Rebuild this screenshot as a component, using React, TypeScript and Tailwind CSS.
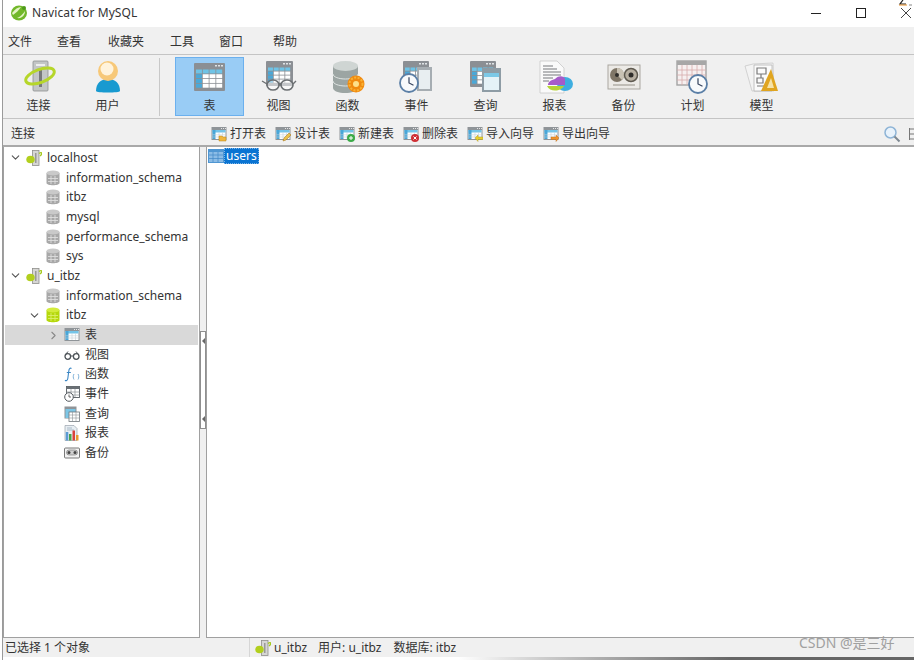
import { ReactNode } from "react";
import { ChevronDown, ChevronRight } from "lucide-react";

// big toolbar icons, all 36x36
const TableBase = ({ x = 0, y = 0, w = 31, h = 28 }: { x?: number; y?: number; w?: number; h?: number }) => {
  const cols = [0, 1, 2, 3];
  const rows = [0, 1, 2, 3];
  const cw = (w - 4) / 4;
  const ch = (h - 9) / 4;
  return (
    <g>
      <rect x={x} y={y} width={w} height={h} rx="1" fill="#8b8f94" />
      <rect x={x + w - 10} y={y + 2} width="2" height="1.5" fill="#dfe3e6" />
      <rect x={x + w - 7} y={y + 2} width="2" height="1.5" fill="#dfe3e6" />
      <rect x={x + w - 4} y={y + 2} width="2" height="1.5" fill="#dfe3e6" />
      {rows.map((r) =>
        cols.map((c) => (
          <rect
            key={`${r}-${c}`}
            x={x + 2 + c * cw}
            y={y + 6.5 + r * ch}
            width={cw - 0.8}
            height={ch - 0.8}
            fill={r === 0 ? "#6fc3e6" : c === 0 ? "#4aa8d8" : "#ffffff"}
          />
        )),
      )}
    </g>
  );
};

const Clock = ({ cx, cy, r }: { cx: number; cy: number; r: number }) => (
  <g>
    <circle cx={cx} cy={cy} r={r} fill="#f8fafc" stroke="#5b7fa6" strokeWidth="1.8" />
    <path d={`M${cx} ${cy - r * 0.65}V${cy}L${cx + r * 0.5} ${cy + r * 0.25}`} stroke="#33415c" strokeWidth="1.2" fill="none" />
  </g>
);

const ConnectBig = () => (
  <svg width="36" height="36" viewBox="0 0 36 36">
    <rect x="12" y="1" width="15" height="30" rx="1" fill="#c3c6c6" stroke="#8d9090" strokeWidth="0.8" />
    <rect x="15" y="4" width="9" height="2" fill="#eeeeee" />
    <rect x="18" y="9" width="3" height="18" fill="#77797a" />
    <ellipse cx="19" cy="16" rx="15" ry="6.500" transform="rotate(-20 19 16)" fill="none" stroke="#b6d62a" strokeWidth="3" />
  </svg>
);

const UserBig = () => (
  <svg width="36" height="36" viewBox="0 0 36 36">
    <path d="M6 31c0-8 5-12 12-12s12 4 12 12c0 2-24 2-24 0z" fill="#189ad0" />
    <circle cx="18" cy="11" r="10" fill="#f7c878" />
    <circle cx="17" cy="9" r="6.500" fill="#fff3dc" />
  </svg>
);

const TableBig = () => (
  <svg width="36" height="36" viewBox="0 0 36 36">
    <TableBase x={2} y={3} w={31} h={28} />
  </svg>
);

const ViewBig = () => (
  <svg width="36" height="36" viewBox="0 0 36 36">
    <TableBase x={5} y={1} w={27} h={25} />
    <g fill="#ffffff" fillOpacity="0.5" stroke="#6b6f72" strokeWidth="1.6">
      <ellipse cx="12" cy="25" rx="6" ry="5" />
      <ellipse cx="26" cy="25" rx="6" ry="5" />
    </g>
    <path d="M18 24h2M6 24l-5-3M32 24l3-3" stroke="#6b6f72" strokeWidth="1.4" />
  </svg>
);

const FuncBig = () => (
  <svg width="36" height="36" viewBox="0 0 36 36">
    <path d="M3 6v22c0 3 6 5 12 5s13-2 13-5V6z" fill="#9ca5a3" />
    <ellipse cx="15.500" cy="6" rx="12.500" ry="5" fill="#cfd5d3" />
    <path d="M3 14c0 3 6 5 12.500 5S28 17 28 14M3 21c0 3 6 5 12.500 5S28 24 28 21" stroke="#dfe4e2" strokeWidth="1" fill="none" />
    <circle cx="26" cy="24" r="8.500" fill="#f08a10" />
    <circle cx="26" cy="24" r="6.500" fill="none" stroke="#f9b233" strokeWidth="2" strokeDasharray="2 1.500" />
    <circle cx="26" cy="24" r="3" fill="#fde08a" />
  </svg>
);

const EventBig = () => (
  <svg width="36" height="36" viewBox="0 0 36 36">
    <TableBase x={4} y={1} w={26} h={25} />
    <rect x="18" y="7" width="15" height="24" fill="#a6adb2" />
    <rect x="20" y="10" width="11" height="19" fill="#e8eef1" />
    <Clock cx={10} cy={23} r={9} />
  </svg>
);

const QueryBig = () => (
  <svg width="36" height="36" viewBox="0 0 36 36">
    <TableBase x={2} y={1} w={26} h={26} />
    <rect x="14" y="8" width="19" height="24" fill="#8e9ca5" />
    <rect x="16" y="13" width="15" height="17" fill="#e5f2f7" />
    <rect x="16" y="13" width="15" height="4" fill="#7cc8e6" />
  </svg>
);

const ReportBig = () => (
  <svg width="36" height="36" viewBox="0 0 36 36">
    <path d="M3 1h17l7 7v25H3z" fill="#fafafa" stroke="#c8c8c8" strokeWidth="0.8" />
    <path d="M6 6h10M6 9h14M6 12h18M6 15h18M6 18h10M6 21h6" stroke="#77797c" strokeWidth="1" />
    <ellipse cx="28" cy="24" rx="8" ry="7" fill="#3eaee0" />
    <path d="M18 19c4-4 9-3 10 0v6H11c0-3 3-5 7-6z" fill="#a65bc9" />
    <path d="M10 26h17c-2 5-14 7-17 0z" fill="#b5d335" />
  </svg>
);

const BackupBig = () => (
  <svg width="36" height="36" viewBox="0 0 36 36">
    <rect x="2" y="5" width="32" height="24" fill="#eceae6" stroke="#a9a69f" strokeWidth="1" />
    <circle cx="11" cy="15" r="7" fill="#7f7667" />
    <path d="M11 8a7 7 0 0 1 5 12l-5-5z" fill="#c9c2b4" />
    <circle cx="11" cy="15" r="2" fill="#2f2d2a" />
    <circle cx="25" cy="15" r="6.500" fill="#b8b0a2" stroke="#5f5a50" strokeWidth="1.500" />
    <circle cx="25" cy="15" r="2.500" fill="#2f2d2a" />
    <path d="M7 25h22" stroke="#c0bdb6" strokeWidth="2" />
  </svg>
);

const ScheduleBig = () => (
  <svg width="36" height="36" viewBox="0 0 36 36">
    <rect x="2" y="1" width="29" height="24" fill="#f6f0f0" stroke="#a3a3a3" strokeWidth="1.4" />
    <rect x="2" y="1" width="29" height="4" fill="#a7a7a7" />
    <path d="M7 5v20M12 5v20M17 5v20M22 5v20M27 5v20M2 10h29M2 15h29M2 20h29" stroke="#d7abab" strokeWidth="0.8" />
    <Clock cx={23} cy={24} r={9} />
  </svg>
);

const ModelBig = () => (
  <svg width="36" height="36" viewBox="0 0 36 36">
    <path d="M1 6l8-2 20-1 1 28H8z" fill="#f3f3f3" stroke="#c9c9c9" strokeWidth="0.8" />
    <path d="M10 5h18v26H10z" fill="#fbfbfb" stroke="#b5b5b5" strokeWidth="0.8" />
    <path d="M13 8h9v6h-9zM13 18h6v5h-6zM13 26h10M17 14v4" fill="none" stroke="#7a7a7a" strokeWidth="1.2" />
    <path d="M27 9l7 22H17z" fill="#e0a520" />
    <path d="M27 18l3 10h-7z" fill="#f6e3a8" />
  </svg>
);

// small 16px icons
const SmallTable = ({ badge }: { badge?: ReactNode }) => (
  <svg width="16" height="16" viewBox="0 0 16 16">
    <rect x="0.500" y="1" width="15" height="13" fill="#8f9498" />
    <rect x="10" y="2" width="1" height="1" fill="#e6e6e6" />
    <rect x="12" y="2" width="1" height="1" fill="#e6e6e6" />
    <rect x="14" y="2" width="1" height="1" fill="#e6e6e6" />
    <rect x="1.500" y="4" width="13" height="9" fill="#ffffff" />
    <rect x="1.500" y="4" width="13" height="2.500" fill="#74c4e8" />
    <rect x="1.500" y="4" width="3" height="9" fill="#48a6d8" />
    <path d="M8 6.500V13M11.500 6.500V13M1.500 8.800h13M1.500 11h13" stroke="#c6d0d6" strokeWidth="0.6" />
    {badge}
  </svg>
);

const badges: Record<string, ReactNode> = {
  open: <path d="M8 10h3l1 1h3v4H8z" fill="#efb73e" stroke="#b98514" strokeWidth="0.5" />,
  design: <path d="M8 15l1-3 5-5 2 2-5 5z" fill="#e9c14b" stroke="#a26f12" strokeWidth="0.5" />,
  add: (
    <g>
      <circle cx="12" cy="12" r="4" fill="#3bab48" />
      <path d="M12 10v4M10 12h4" stroke="#fff" strokeWidth="1" />
    </g>
  ),
  del: (
    <g>
      <circle cx="12" cy="12" r="4" fill="#cf2f35" />
      <path d="M10.500 10.500l3 3M13.500 10.500l-3 3" stroke="#fff" strokeWidth="1" />
    </g>
  ),
  imp: <path d="M8 12l3-3v2h5v2.500h-5v2z" fill="#e8cf2e" stroke="#a79215" strokeWidth="0.4" />,
  exp: <path d="M16 12l-3-3v2H8v2.500h5v2z" fill="#f0932b" stroke="#b86610" strokeWidth="0.4" />,
};

const ConnectSmall = () => (
  <svg width="16" height="16" viewBox="0 0 16 16">
    <rect x="6.500" y="0.500" width="6.500" height="15" fill="#d6d6d4" stroke="#8f8f8c" strokeWidth="0.8" />
    <rect x="9.200" y="3" width="1.200" height="10" fill="#8a8a88" />
    <ellipse cx="4.500" cy="9.500" rx="4.200" ry="3.800" fill="#b2cf1e" />
    <path d="M13 3.500c2-1.500 3-1 2.500 1L14 6" stroke="#a5c91e" strokeWidth="1.400" fill="none" />
  </svg>
);

const DbSmall = ({ active }: { active?: boolean }) => {
  const body = active ? "#b5d80c" : "#a8a8a8";
  const top = active ? "#d3ec3c" : "#c9c9c9";
  const line = active ? "#dcef6b" : "#dedede";
  return (
    <svg width="14" height="16" viewBox="0 0 14 16">
      <path d="M0.500 3v10c0 3 13 3 13 0V3z" fill={body} />
      <ellipse cx="7" cy="3" rx="6.500" ry="2.500" fill={top} />
      <path d="M5 6v8M9 6v8M2 8.500h10M2 11.500h10" stroke={line} strokeWidth="0.9" />
    </svg>
  );
};

const GlassesSmall = () => (
  <svg width="16" height="16" viewBox="0 0 16 16">
    <circle cx="3.800" cy="9.500" r="2.800" fill="#fff" stroke="#4d5358" strokeWidth="1.300" />
    <circle cx="12.200" cy="9.500" r="2.800" fill="#fff" stroke="#4d5358" strokeWidth="1.300" />
    <path d="M6.500 9h3M2 7l2-2.500M14 7l-2-2.500" stroke="#4d5358" strokeWidth="1" fill="none" />
  </svg>
);

const FuncSmall = () => (
  <svg width="16" height="16" viewBox="0 0 16 16">
    <path d="M7.500 2.500C6 1.500 5 3 4.800 5L3.800 12.500C3.500 14.500 2 15 1 14.200M2.800 6.500h4" stroke="#3b86c4" strokeWidth="1.100" fill="none" />
    <path d="M10 8c-1 1.500-1 4 0 5.500M14 8c1 1.500 1 4 0 5.500" stroke="#6fa7d3" strokeWidth="0.900" fill="none" />
  </svg>
);

const EventSmall = () => (
  <svg width="16" height="16" viewBox="0 0 16 16">
    <rect x="2.500" y="0.500" width="13" height="11" fill="#fff" stroke="#555b60" strokeWidth="0.900" />
    <rect x="2.500" y="0.500" width="13" height="2.500" fill="#6a7075" />
    <path d="M7 3v8M11 3v8M2.500 6h13M2.500 9h13" stroke="#8d9397" strokeWidth="0.700" />
    <circle cx="5" cy="11" r="4.300" fill="#fff" stroke="#555b60" strokeWidth="1" />
    <path d="M5 8.500V11h2" stroke="#444" strokeWidth="0.800" fill="none" />
  </svg>
);

const QuerySmall = () => (
  <svg width="16" height="16" viewBox="0 0 16 16">
    <rect x="0.500" y="0.500" width="12" height="12" fill="#8f9498" />
    <rect x="1.500" y="3" width="10" height="9" fill="#7cc6e6" />
    <rect x="5" y="6" width="10.500" height="9.500" fill="#fff" stroke="#6f767b" strokeWidth="0.800" />
    <path d="M8.500 6v9M12 6v9M5 9h10M5 12h10" stroke="#8d9397" strokeWidth="0.600" />
  </svg>
);

const ReportSmall = () => (
  <svg width="16" height="16" viewBox="0 0 16 16">
    <path d="M1 0.500h9l3 3V15.500H1z" fill="#e8eef3" stroke="#9aa4ad" strokeWidth="0.700" />
    <path d="M3 3h5M3 5h7" stroke="#8fa3b5" strokeWidth="0.700" />
    <rect x="5" y="9" width="2.500" height="6.500" fill="#4aa34a" />
    <rect x="8.500" y="5.500" width="2.500" height="10" fill="#d9423b" />
    <rect x="12" y="10" width="2.500" height="5.500" fill="#e89a2e" />
    <rect x="1.800" y="7" width="2.500" height="8.500" fill="#5a9bd4" />
  </svg>
);

const BackupSmall = () => (
  <svg width="16" height="16" viewBox="0 0 16 16">
    <rect x="0.500" y="3" width="15" height="10" rx="1" fill="#f2f2f2" stroke="#6a6a6a" strokeWidth="0.900" />
    <rect x="2.500" y="5" width="11" height="5" rx="2.500" fill="#d0d0d0" stroke="#6a6a6a" strokeWidth="0.600" />
    <circle cx="5" cy="7.500" r="1.500" fill="#444" />
    <circle cx="11" cy="7.500" r="1.500" fill="#444" />
  </svg>
);

const toolbar: { label: string; icon: ReactNode; active?: boolean }[] = [
  { label: "表", icon: <TableBig />, active: true },
  { label: "视图", icon: <ViewBig /> },
  { label: "函数", icon: <FuncBig /> },
  { label: "事件", icon: <EventBig /> },
  { label: "查询", icon: <QueryBig /> },
  { label: "报表", icon: <ReportBig /> },
  { label: "备份", icon: <BackupBig /> },
  { label: "计划", icon: <ScheduleBig /> },
  { label: "模型", icon: <ModelBig /> },
];

const actions = [
  { label: "打开表", badge: badges.open },
  { label: "设计表", badge: badges.design },
  { label: "新建表", badge: badges.add },
  { label: "删除表", badge: badges.del },
  { label: "导入向导", badge: badges.imp },
  { label: "导出向导", badge: badges.exp },
];

function ToolButton({ label, icon, active }: { label: string; icon: ReactNode; active?: boolean }) {
  return (
    <div
      className={`w-[69px] h-[59px] flex flex-col items-center pt-[2px] border ${
        active ? "bg-[#99ccf5] border-[#6bb0ee]" : "border-transparent"
      }`}
    >
      <div className="w-9 h-9">{icon}</div>
      <span className="mt-[2px] text-[12px] leading-[16px] text-[#333]">{label}</span>
    </div>
  );
}

function Row({ indent, open, closed, icon, text, selected }: {
  indent: string;
  open?: boolean;
  closed?: boolean;
  icon: ReactNode;
  text: string;
  selected?: boolean;
}) {
  return (
    <div className={`h-[19.7px] flex items-center ${indent} ${selected ? "bg-[#d9d9d9]" : ""}`}>
      <div className="w-[20px] flex justify-center text-[#555] pr-[2px]">
        {open && <ChevronDown size={13} strokeWidth={2} />}
        {closed && <ChevronRight size={13} strokeWidth={2} className="text-[#888]" />}
      </div>
      <div className="flex items-center justify-center w-4 h-4">{icon}</div>
      <span className="ml-[5px] text-[12px] text-[#333] whitespace-nowrap">{text}</span>
    </div>
  );
}

export default function App() {
  return (
    <div className="relative w-[914px] h-[660px] overflow-hidden bg-white pl-[2px] font-['Noto_Sans','Noto_Sans_CJK_SC',sans-serif]">
      <div className="h-full border-l border-[#9a9a9a] flex flex-col">
        {/* title bar */}
        <div className="h-[27px] bg-white flex items-center pl-[8px] pb-px shrink-0">
          <svg width="16" height="16" viewBox="0 0 16 16">
            <ellipse cx="8" cy="8" rx="8" ry="7.500" fill="#72b82a" />
            <path d="M1 8c3-4 6-6 9-6-2 3-5 6-8 8zM6 13c3-1 6-4 8-7 0 4-3 8-8 7z" fill="#e4f4c4" />
            <circle cx="13" cy="3" r="2" fill="#4e9b1a" />
          </svg>
          <span className="ml-[5px] text-[12px] tracking-[0.1px] text-[#333] flex-1">Navicat for MySQL</span>
          <div className="w-[10px] h-px bg-[#222] mr-[35px]" />
          <div className="w-[10px] h-[10px] border border-[#222] mr-[34px]" />
          <svg width="12" height="12" viewBox="0 0 12 12" className="mr-[2px]">
            <path d="M1 1l10 10M11 1L1 11" stroke="#444" strokeWidth="1" />
          </svg>
        </div>

        {/* menu */}
        <div className="h-[28px] bg-[#f0f0f0] border-b border-[#c4c4c4] flex items-center text-[12px] text-[#333] shrink-0 pl-[5px] pt-[2px]">
          <span>文件</span>
          <span className="ml-[25px]">查看</span>
          <span className="ml-[27px]">收藏夹</span>
          <span className="ml-[26px]">工具</span>
          <span className="ml-[25px]">窗口</span>
          <span className="ml-[30px]">帮助</span>
        </div>

        {/* main toolbar */}
        <div className="h-[64px] bg-[#f0f0f0] border-b border-[#c4c4c4] flex items-center shrink-0 pl-[1px]">
          <ToolButton label="连接" icon={<ConnectBig />} />
          <ToolButton label="用户" icon={<UserBig />} />
          <div className="w-px h-[58px] bg-[#c8c8c8] ml-[17px] mr-[15px]" />
          {toolbar.map((t) => (
            <ToolButton key={t.label} {...t} />
          ))}
        </div>

        {/* object toolbar */}
        <div className="h-[28px] bg-[#f0f0f0] border-b-2 border-[#a9a9a9] flex items-center text-[12px] text-[#333] shrink-0 pl-[8px] pt-[3px]">
          <span className="w-[200px]">连接</span>
          {actions.map((a) => (
            <div key={a.label} className="flex items-center gap-[3px] mr-[9px] whitespace-nowrap">
              <SmallTable badge={a.badge} />
              <span>{a.label}</span>
            </div>
          ))}
          <div className="flex-1" />
          <svg width="18" height="18" viewBox="0 0 18 18" className="shrink-0">
            <circle cx="7.500" cy="7.500" r="5.500" fill="#e8f2fb" stroke="#8eb4d6" strokeWidth="1.500" />
            <path d="M11.500 11.500l5 5" stroke="#7d8790" strokeWidth="2" />
          </svg>
          <svg width="5" height="14" viewBox="0 0 5 14" className="ml-[8px] shrink-0">
            <path d="M0.500 1v12M0.500 2h5M0.500 7h5M0.500 12h5" stroke="#777" strokeWidth="1" fill="none" />
          </svg>
        </div>

        {/* panels */}
        <div className="flex-1 flex min-h-0">
          <div className="w-[197px] bg-white border border-t-0 border-[#a0a0a0] pl-[1px] pr-px pt-px overflow-hidden">
            <Row indent="pl-[1px]" open icon={<ConnectSmall />} text="localhost" />
            <Row indent="pl-[20px]" icon={<DbSmall />} text="information_schema" />
            <Row indent="pl-[20px]" icon={<DbSmall />} text="itbz" />
            <Row indent="pl-[20px]" icon={<DbSmall />} text="mysql" />
            <Row indent="pl-[20px]" icon={<DbSmall />} text="performance_schema" />
            <Row indent="pl-[20px]" icon={<DbSmall />} text="sys" />
            <Row indent="pl-[1px]" open icon={<ConnectSmall />} text="u_itbz" />
            <Row indent="pl-[20px]" icon={<DbSmall />} text="information_schema" />
            <Row indent="pl-[20px]" open icon={<DbSmall active />} text="itbz" />
            <Row indent="pl-[39px]" closed selected icon={<SmallTable />} text="表" />
            <Row indent="pl-[39px]" icon={<GlassesSmall />} text="视图" />
            <Row indent="pl-[39px]" icon={<FuncSmall />} text="函数" />
            <Row indent="pl-[39px]" icon={<EventSmall />} text="事件" />
            <Row indent="pl-[39px]" icon={<QuerySmall />} text="查询" />
            <Row indent="pl-[39px]" icon={<ReportSmall />} text="报表" />
            <Row indent="pl-[39px]" icon={<BackupSmall />} text="备份" />
          </div>

          {/* splitter */}
          <div className="w-[6px] bg-[#f0f0f0] flex flex-col pt-[184px] items-center">
            <div className="w-[6px] h-[98px] bg-white border border-[#8f8f8f] flex flex-col justify-between py-[6px] items-center">
              <div className="w-0 h-0 border-y-[3px] border-y-transparent border-r-[3px] border-r-[#666]" />
              <div className="w-0 h-0 border-y-[3px] border-y-transparent border-r-[3px] border-r-[#666]" />
            </div>
          </div>

          <div className="flex-1 bg-white border-l border-b border-[#a0a0a0] pl-px pt-[1px]">
            <div className="flex items-center h-[16px]">
              <svg width="16" height="14" viewBox="0 0 16 14">
                <rect x="0" y="0" width="16" height="14" fill="#4f96d2" />
                <rect x="1" y="3" width="14" height="10" fill="#8bbce6" />
                <path d="M5 3v10M10 3v10M1 6h14M1 9.500h14" stroke="#3f86c6" strokeWidth="0.700" />
              </svg>
              <span className="h-[16px] leading-[14px] px-[1px] bg-[#0a74d2] text-white text-[12px] border border-dotted border-[#7db4e6]">users</span>
            </div>
          </div>
        </div>

        {/* status */}
        <div className="h-[19px] bg-[#f0f0f0] flex items-center text-[12px] text-[#333] shrink-0 pl-[2px]">
          <span className="w-[244px] whitespace-nowrap">已选择 1 个对象</span>
          <div className="h-full border-l border-[#d6d6d6] flex items-center pl-[5px] gap-[3px]">
            <ConnectSmall />
            <span>u_itbz</span>
            <span className="ml-[8px]">用户: u_itbz</span>
            <span className="ml-[9px]">数据库: itbz</span>
          </div>
        </div>
        <div className="h-[3px] bg-gradient-to-r from-white from-50% to-[#666] to-80% shrink-0" />
      </div>

      {/* bit of another window poking in above the close button */}
      <svg width="16" height="6" viewBox="0 0 16 6" className="absolute left-[897px] top-0">
        <path d="M6 0L3 4h6" stroke="#222" strokeWidth="1.200" fill="none" />
        <path d="M2 5h8" stroke="#e8902a" strokeWidth="1" />
        <path d="M12 5h3" stroke="#888" strokeWidth="1" />
      </svg>

      <span className="absolute left-[799px] top-[632px] text-[14px] text-[#a0a0a0]">CSDN @是三好</span>
    </div>
  );
}
